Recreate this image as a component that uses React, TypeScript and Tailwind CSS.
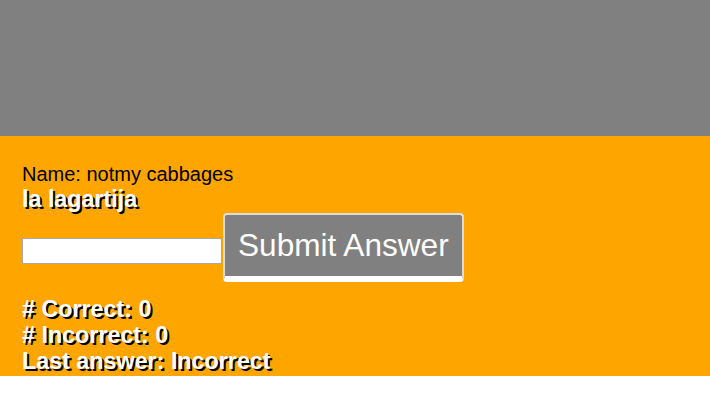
// @ts-nocheck
import React, { useState } from 'react';

export default function App() {
  const [answer, setAnswer] = useState('');
  const [correct] = useState(0);
  const [incorrect] = useState(0);

  return (
    <div className="w-full font-['Liberation_Sans',Arial,sans-serif]">
      <div className="h-[136px] bg-[#808080]" />

      <div className="bg-[#FFA500] pl-[22px] pt-[27px] pb-[2px]">
        <div className="text-[20px] leading-[23px] text-black">Name: notmy cabbages</div>
        <div className="text-[23.3px] leading-[26px] font-bold text-white [text-shadow:2px_2px_0_#000]">
          la lagartija
        </div>

        <div className="flex items-start mt-[1px]">
          <input
            value={answer}
            onChange={e => setAnswer(e.target.value)}
            className="mt-[25px] w-[200px] h-[26px] bg-white border border-[#a9a9a9] outline-none px-1 text-[13px]"
          />
          <button className="ml-[1px] bg-[#808080] text-white text-[31.6px] leading-[37px] px-[13px] py-[12px] border-2 border-[#dcdcdc] border-b-[6px] border-b-white rounded-[4px]">
            Submit Answer
          </button>
        </div>

        <div className="mt-[14px] text-[23.3px] leading-[26px] font-bold text-white [text-shadow:2px_2px_0_#000]">
          <div># Correct: {correct}</div>
          <div># Incorrect: {incorrect}</div>
          <div>Last answer: Incorrect</div>
        </div>
      </div>
    </div>
  );
}
